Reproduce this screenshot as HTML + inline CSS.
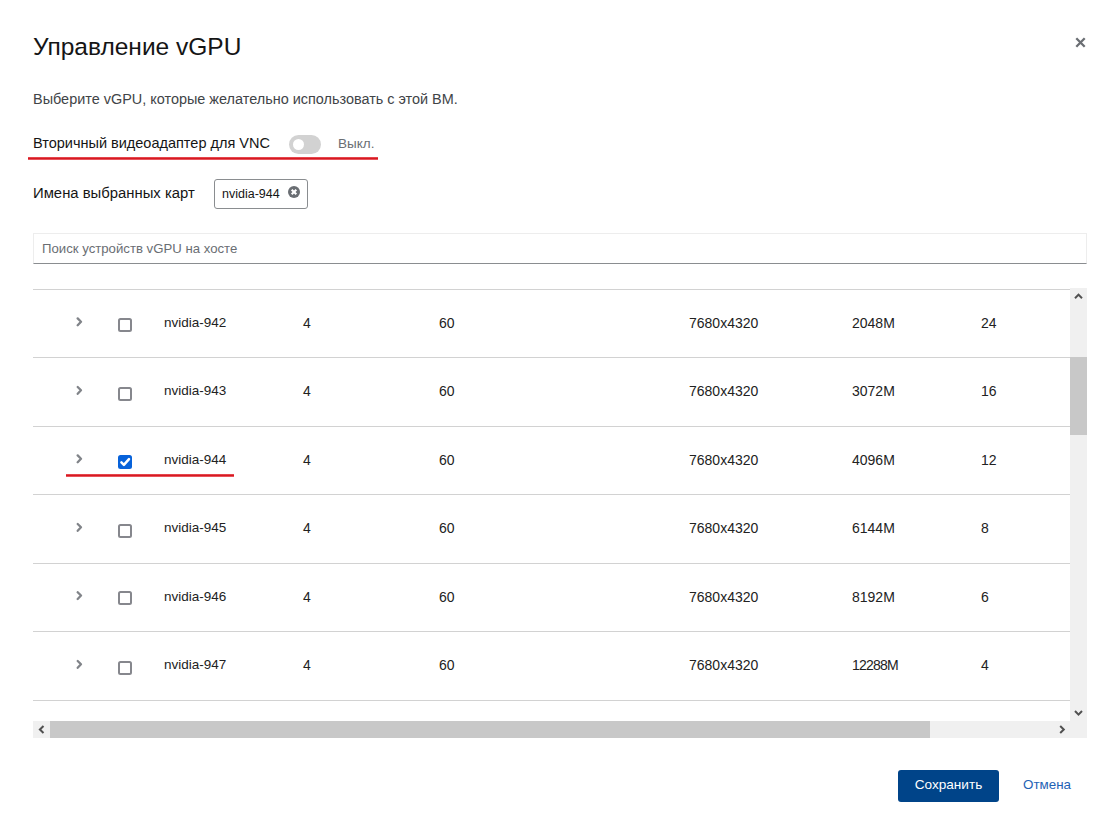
<!DOCTYPE html>
<html><head><meta charset="utf-8">
<style>
*{box-sizing:border-box;margin:0;padding:0}
html,body{width:1120px;height:835px;background:#fff;overflow:hidden;font-family:"Liberation Sans",sans-serif;color:#151515}
.abs{position:absolute;white-space:nowrap}
.title{left:33px;top:33px;font-size:24.5px;line-height:28px;color:#151515}
.close{left:1074px;top:36px;width:13px;height:13px}
.sub{left:33px;top:91px;font-size:14.45px;line-height:16px;color:#414447}
.lbl{line-height:16px;color:#151515}
.toggle{left:289px;top:135px;width:32px;height:19px;border-radius:9.5px;background:#d2d2d2}
.toggle i{position:absolute;left:3.5px;top:3.8px;width:11.5px;height:11.5px;border-radius:50%;background:#fff}
.off{left:338px;top:136px;font-size:13.5px;line-height:16px;color:#6a6e73}
.red{height:3px;background:linear-gradient(#ee5a60,#d51a22 50%,#f27077)}
.chip{left:214px;top:179px;width:94px;height:30px;border:1px solid #8a8d90;border-radius:3px}
.chip span{position:absolute;left:7px;top:7px;font-size:12.5px;line-height:14px;color:#151515}
.search{left:33px;top:233px;width:1054px;height:31px;border:1px solid #ededed;border-bottom:1px solid #8a8d90}
.search span{position:absolute;left:8px;top:7px;font-size:13.2px;line-height:16px;color:#6a6e73}
.hline{left:33px;width:1037px;height:1px;background:#d2d2d2}
.cell{font-size:14px;line-height:16px;color:#222}
.cb{width:14px;height:14px;border:2px solid #86878d;border-radius:2.5px}
.cbc{width:14px;height:14px;background:#0762da;border-radius:2.5px}
.cbc svg{position:absolute;left:0;top:0}
.vsb{left:1070px;top:288px;width:17px;height:433px;background:#f0f0f0}
.vthumb{left:1070px;top:357px;width:17px;height:78px;background:#c8c8c8}
.hsb{left:33px;top:721px;width:1054px;height:17px;background:#f0f0f0}
.hthumb{left:50px;top:721px;width:880px;height:17px;background:#c8c8c8}
.btn{left:898px;top:770px;width:101px;height:32px;background:#004489;border-radius:3px;color:#fff;font-size:13.6px;line-height:29.5px;text-align:center}
.cancel{left:1023px;top:777px;font-size:13.4px;line-height:16px;color:#1f62b5}
</style></head><body>
<div class="abs title">Управление vGPU</div>
<svg class="abs close" viewBox="0 0 13 13"><path d="M2.3 2.3L10.7 10.7M10.7 2.3L2.3 10.7" stroke="#6a6e73" stroke-width="2.3"/></svg>
<div class="abs sub">Выберите vGPU, которые желательно использовать с этой ВМ.</div>
<div class="abs lbl" style="left:33px;top:135px;font-size:14.5px">Вторичный видеоадаптер для VNC</div>
<div class="abs toggle"><i></i></div>
<div class="abs off">Выкл.</div>
<div class="abs red" style="left:28px;top:157px;width:350px"></div>
<div class="abs red" style="left:66px;top:474px;width:168px"></div>
<div class="abs lbl" style="left:33px;top:185px;font-size:14.85px">Имена выбранных карт</div>
<div class="abs chip"><span>nvidia-944</span>
<svg style="position:absolute;left:73px;top:6px" width="12" height="12" viewBox="0 0 12 12"><circle cx="6" cy="6" r="6" fill="#6a6e73"/><path d="M3.7 3.7L8.3 8.3M8.3 3.7L3.7 8.3" stroke="#fff" stroke-width="2.1"/></svg>
</div>
<div class="abs search"><span>Поиск устройств vGPU на хосте</span></div>
<div class="abs hline" style="top:289px"></div>
<div class="abs hline" style="top:357px"></div>
<div class="abs hline" style="top:426px"></div>
<div class="abs hline" style="top:494px"></div>
<div class="abs hline" style="top:563px"></div>
<div class="abs hline" style="top:631px"></div>
<div class="abs hline" style="top:700px"></div>
<svg class="abs" style="left:75px;top:317px" width="9" height="12" viewBox="0 0 9 12"><path d="M2.7 1.40L6 4.70L2.7 8.20" fill="none" stroke="#818489" stroke-width="2.3" stroke-linecap="round" stroke-linejoin="round"/></svg>
<div class="abs cb" style="left:118px;top:318px"></div>
<div class="abs cell" style="left:164px;top:315px;font-size:13.5px">nvidia-942</div>
<div class="abs cell" style="left:303px;top:315px">4</div>
<div class="abs cell" style="left:439px;top:315px">60</div>
<div class="abs cell" style="left:689px;top:315px">7680x4320</div>
<div class="abs cell" style="left:852px;top:315px">2048M</div>
<div class="abs cell" style="left:981px;top:315px">24</div>
<svg class="abs" style="left:75px;top:385px" width="9" height="12" viewBox="0 0 9 12"><path d="M2.7 2.00L6 5.30L2.7 8.80" fill="none" stroke="#818489" stroke-width="2.3" stroke-linecap="round" stroke-linejoin="round"/></svg>
<div class="abs cb" style="left:118px;top:387px"></div>
<div class="abs cell" style="left:164px;top:383px;font-size:13.5px">nvidia-943</div>
<div class="abs cell" style="left:303px;top:383px">4</div>
<div class="abs cell" style="left:439px;top:383px">60</div>
<div class="abs cell" style="left:689px;top:383px">7680x4320</div>
<div class="abs cell" style="left:852px;top:383px">3072M</div>
<div class="abs cell" style="left:981px;top:383px">16</div>
<svg class="abs" style="left:75px;top:454px" width="9" height="12" viewBox="0 0 9 12"><path d="M2.7 1.40L6 4.70L2.7 8.20" fill="none" stroke="#818489" stroke-width="2.3" stroke-linecap="round" stroke-linejoin="round"/></svg>
<div class="abs cbc" style="left:118px;top:455px"><svg width="14" height="14" viewBox="0 0 14 14"><path d="M3.4 7.4L5.9 9.9L11 4.2" fill="none" stroke="#fff" stroke-width="2.5" stroke-linecap="round" stroke-linejoin="round"/></svg></div>
<div class="abs cell" style="left:164px;top:452px;font-size:13.5px">nvidia-944</div>
<div class="abs cell" style="left:303px;top:452px">4</div>
<div class="abs cell" style="left:439px;top:452px">60</div>
<div class="abs cell" style="left:689px;top:452px">7680x4320</div>
<div class="abs cell" style="left:852px;top:452px">4096M</div>
<div class="abs cell" style="left:981px;top:452px">12</div>
<svg class="abs" style="left:75px;top:522px" width="9" height="12" viewBox="0 0 9 12"><path d="M2.7 2.00L6 5.30L2.7 8.80" fill="none" stroke="#818489" stroke-width="2.3" stroke-linecap="round" stroke-linejoin="round"/></svg>
<div class="abs cb" style="left:118px;top:524px"></div>
<div class="abs cell" style="left:164px;top:520px;font-size:13.5px">nvidia-945</div>
<div class="abs cell" style="left:303px;top:520px">4</div>
<div class="abs cell" style="left:439px;top:520px">60</div>
<div class="abs cell" style="left:689px;top:520px">7680x4320</div>
<div class="abs cell" style="left:852px;top:520px">6144M</div>
<div class="abs cell" style="left:981px;top:520px">8</div>
<svg class="abs" style="left:75px;top:591px" width="9" height="12" viewBox="0 0 9 12"><path d="M2.7 1.20L6 4.50L2.7 8.00" fill="none" stroke="#818489" stroke-width="2.3" stroke-linecap="round" stroke-linejoin="round"/></svg>
<div class="abs cb" style="left:118px;top:591px"></div>
<div class="abs cell" style="left:164px;top:589px;font-size:13.5px">nvidia-946</div>
<div class="abs cell" style="left:303px;top:589px">4</div>
<div class="abs cell" style="left:439px;top:589px">60</div>
<div class="abs cell" style="left:689px;top:589px">7680x4320</div>
<div class="abs cell" style="left:852px;top:589px">8192M</div>
<div class="abs cell" style="left:981px;top:589px">6</div>
<svg class="abs" style="left:75px;top:659px" width="9" height="12" viewBox="0 0 9 12"><path d="M2.7 2.00L6 5.30L2.7 8.80" fill="none" stroke="#818489" stroke-width="2.3" stroke-linecap="round" stroke-linejoin="round"/></svg>
<div class="abs cb" style="left:118px;top:661px"></div>
<div class="abs cell" style="left:164px;top:657px;font-size:13.5px">nvidia-947</div>
<div class="abs cell" style="left:303px;top:657px">4</div>
<div class="abs cell" style="left:439px;top:657px">60</div>
<div class="abs cell" style="left:689px;top:657px">7680x4320</div>
<div class="abs cell" style="left:852px;top:657px;letter-spacing:-0.8px">12288M</div>
<div class="abs cell" style="left:981px;top:657px">4</div>
<div class="abs vsb"></div>
<div class="abs vthumb"></div>
<svg class="abs" style="left:1070px;top:289px" width="17" height="14" viewBox="0 0 17 14"><path d="M5 9.2L8.5 5.6L12 9.2" fill="none" stroke="#505050" stroke-width="2"/></svg>
<svg class="abs" style="left:1070px;top:705px" width="17" height="14" viewBox="0 0 17 14"><path d="M5 6L8.5 9.6L12 6" fill="none" stroke="#505050" stroke-width="2"/></svg>
<div class="abs hsb"></div>
<div class="abs hthumb"></div>
<svg class="abs" style="left:33px;top:721px" width="17" height="17" viewBox="0 0 17 17"><path d="M10.5 5L6.9 8.5L10.5 12" fill="none" stroke="#505050" stroke-width="2"/></svg>
<svg class="abs" style="left:1053px;top:721px" width="17" height="17" viewBox="0 0 17 17"><path d="M7.2 5L10.8 8.5L7.2 12" fill="none" stroke="#505050" stroke-width="2"/></svg>
<div class="abs btn">Сохранить</div>
<div class="abs cancel">Отмена</div>
</body></html>
